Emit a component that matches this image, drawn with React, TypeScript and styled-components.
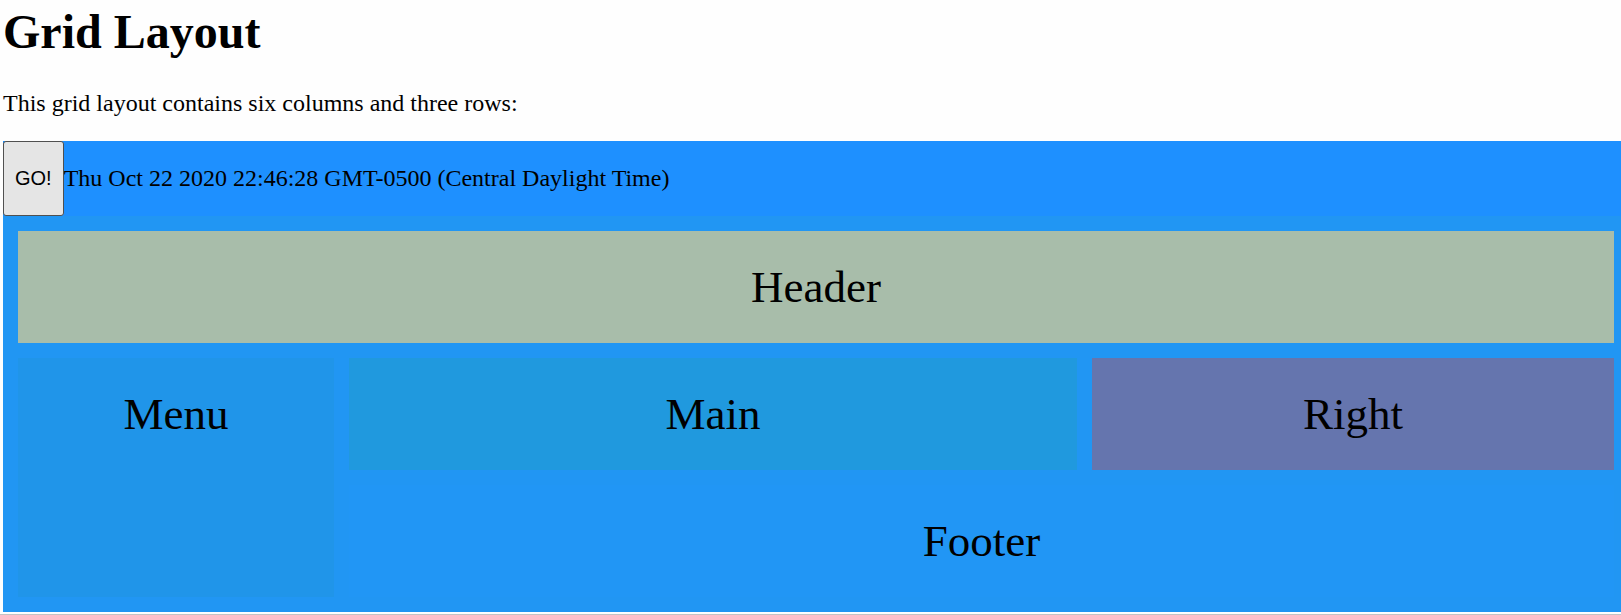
import React, { useState } from "react";
import styled, { createGlobalStyle } from "styled-components";

const GlobalStyle = createGlobalStyle`
  body {
    margin: 0;
    background: #fefefe;
    color: #000;
    font-family: "Liberation Serif", "Times New Roman", serif;
    font-size: 24px;
    overflow-x: hidden;
  }
`;

const Page = styled.main`
  padding: 4px 0 2px 3px;
  border-bottom: 1px solid #c4c4c4;
`;

const Title = styled.h1`
  margin: 0 0 31px;
  font-size: 48px;
  line-height: 55px;
`;

const Intro = styled.p`
  margin: 0 0 24px;
  line-height: 27px;
`;

/* The board bleeds past the right edge of the window. */
const Board = styled.div`
  margin-right: -8px;
  background: #2196f3;
`;

const Toolbar = styled.div`
  display: flex;
  align-items: stretch;
  background: dodgerblue;
`;

const GoButton = styled.button`
  padding: 1px 11px;
  border: 1px solid #505050;
  border-radius: 3px;
  background: #e5e5e5;
  color: #000;
  font: 20px "Liberation Sans", Arial, sans-serif;
`;

const Clock = styled.p`
  margin: 24px 0;
  line-height: 27px;
`;

const Grid = styled.div`
  display: grid;
  grid-template-areas:
    "header header header header header header"
    "menu main main main right right"
    "menu footer footer footer footer footer";
  gap: 15px;
  padding: 15px;
`;

const Area = styled.section<{ $area: string; $color: string }>`
  grid-area: ${(p) => p.$area};
  padding: 30px 0;
  background: ${(p) => p.$color};
  font-size: 45px;
  line-height: 52px;
  text-align: center;
`;

const areas = [
  { area: "header", label: "Header", color: "#a8bdaa" },
  { area: "menu", label: "Menu", color: "#2095e9" },
  { area: "main", label: "Main", color: "#2099de" },
  { area: "right", label: "Right", color: "#6575ae" },
  { area: "footer", label: "Footer", color: "#2196f5" },
];

export default function App() {
  const [time, setTime] = useState(
    "Thu Oct 22 2020 22:46:28 GMT-0500 (Central Daylight Time)"
  );

  return (
    <>
      <GlobalStyle />
      <Page>
        <Title>Grid Layout</Title>
        <Intro>This grid layout contains six columns and three rows:</Intro>
        <Board>
          <Toolbar>
            <GoButton type="button" onClick={() => setTime(String(new Date()))}>
              GO!
            </GoButton>
            <Clock>{time}</Clock>
          </Toolbar>
          <Grid>
            {areas.map(({ area, label, color }) => (
              <Area key={area} $area={area} $color={color}>
                {label}
              </Area>
            ))}
          </Grid>
        </Board>
      </Page>
    </>
  );
}
